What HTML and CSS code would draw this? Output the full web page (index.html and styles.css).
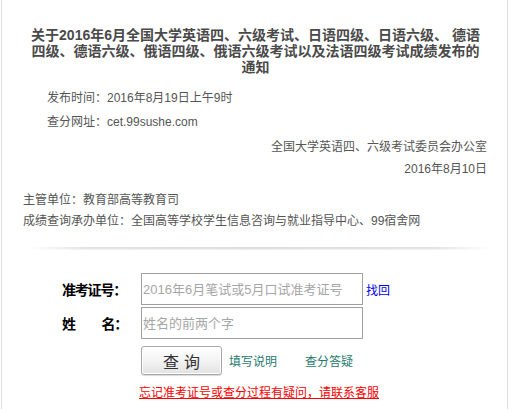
FILE: index.html
```html
<!DOCTYPE html>
<html lang="zh-CN">
<head>
<meta charset="utf-8">
<title>成绩查询</title>
<link rel="stylesheet" href="styles.css">
</head>
<body>
<div class="page">
  <h1 class="title">关于2016年6月全国大学英语四、六级考试、日语四级、日语六级、 德语四级、德语六级、俄语四级、俄语六级考试以及法语四级考试成绩发布的通知</h1>
  <div class="info">
    <p>发布时间：2016年8月19日上午9时</p>
    <p>查分网址：cet.99sushe.com</p>
  </div>
  <div class="sign">
    <p>全国大学英语四、六级考试委员会办公室</p>
    <p>2016年8月10日</p>
  </div>
  <div class="units">
    <p>主管单位：教育部高等教育司</p>
    <p>成绩查询承办单位：全国高等学校学生信息咨询与就业指导中心、99宿舍网</p>
  </div>
  <div class="sep"></div>
  <form class="form">
    <div class="row">
      <label class="label">准考证号：</label>
      <input class="field" type="text" placeholder="2016年6月笔试或5月口试准考证号">
      <a class="find" href="#">找回</a>
    </div>
    <div class="row row2">
      <label class="label spread"><span>姓</span><span>名：</span></label>
      <input class="field" type="text" placeholder="姓名的前两个字">
    </div>
    <div class="row row3">
      <button class="btn" type="button">查询</button>
      <a class="link" href="#">填写说明</a>
      <a class="link link2" href="#">查分答疑</a>
    </div>
    <div class="help"><a href="#">忘记准考证号或查分过程有疑问，请联系客服</a></div>
  </form>
</div>
</body>
</html>
```

FILE: styles.css
```css
html, body {
  margin: 0;
  padding: 0;
  background: #fff;
}
body {
  font-family: "Liberation Sans", "Noto Sans CJK SC", sans-serif;
  font-size: 12px;
  color: #555;
}
.page {
  margin-left: 1px;
  width: 505px;
  min-height: 409px;
  border-left: 1px solid #ddd;
  border-right: 1px solid #ddd;
  overflow: hidden;
}
p { margin: 0; }
.title {
  margin: 0;
  padding: 27px 21px 0 23px;
  font-size: 14px;
  line-height: 16px;
  font-weight: bold;
  color: #4a4a4a;
  text-align: center;
}
.info {
  margin-top: 11px;
  padding-left: 45px;
  line-height: 24px;
}
.sign {
  margin-top: 2px;
  padding-right: 20px;
  text-align: right;
  line-height: 22px;
}
.units {
  margin-top: 10px;
  padding-left: 21px;
  line-height: 21px;
}
.sep {
  margin: 15px 18px 0 28px;
  height: 3px;
  background: linear-gradient(to right, rgba(255,255,255,0), #e2e2e2 12%, #dcdcdc 50%, #e2e2e2 88%, rgba(255,255,255,0));
  -webkit-mask-image: linear-gradient(to bottom, #000 0%, #000 40%, rgba(0,0,0,0.3) 100%);
}
.form {
  margin: 23px 0 0 60px;
}
.row {
  display: flex;
  align-items: center;
}
.row2 { margin-top: 2px; }
.row3 { margin-top: 7px; padding-left: 79px; }
.label {
  width: 65px;
  margin-right: 14px;
  font-family: "Noto Sans CJK SC", sans-serif;
  font-size: 14px;
  letter-spacing: -1.2px;
  font-weight: bold;
  color: #000;
  white-space: nowrap;
}
.spread {
  display: flex;
  justify-content: space-between;
}
.field {
  box-sizing: border-box;
  width: 222px;
  height: 32px;
  margin: 0;
  padding: 0 0 0 1px;
  border: 1px solid #a0a0a0;
  font-family: "Liberation Sans", "Noto Sans CJK SC", sans-serif;
  font-size: 13px;
  color: #333;
  outline: none;
}
.field::placeholder {
  color: #a6a6a6;
}
.find {
  margin-left: 3px;
  font-size: 12px;
  color: #0000ee;
  text-decoration: none;
}
.btn {
  box-sizing: border-box;
  width: 81px;
  height: 29px;
  margin: 0;
  padding: 0 0 0 5px;
  border: 1px solid #a8a8a8;
  border-radius: 3px;
  background: linear-gradient(to bottom, #ffffff 0%, #f3f3f3 50%, #e2e2e2 100%);
  box-shadow: inset 0 0 0 1px #fff, 0 1px 1px rgba(0,0,0,0.15);
  font-family: "Noto Sans CJK SC", sans-serif;
  font-size: 16px;
  letter-spacing: 5px;
  color: #333;
}
.link {
  margin-left: 7px;
  font-size: 12px;
  color: #1f7a6e;
  text-decoration: none;
}
.link2 { margin-left: 28px; }
.help {
  margin-top: 10px;
  margin-left: 77px;
  line-height: 16px;
}
.help a {
  font-size: 12px;
  color: #ff0000;
  text-decoration: underline;
}
```
